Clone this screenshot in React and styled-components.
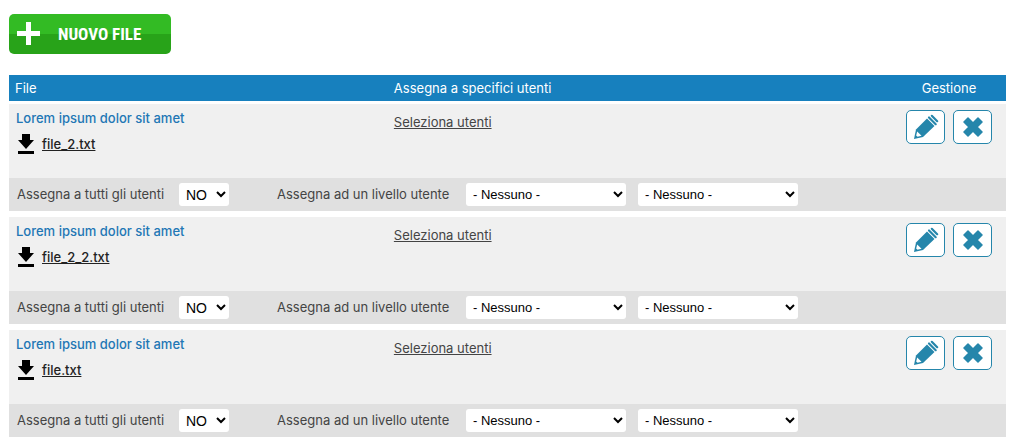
import { useState } from 'react';
import styled, { createGlobalStyle } from 'styled-components';

const GlobalStyle = createGlobalStyle`
  body {
    margin: 0;
    background: #fff;
    color: #444;
    font-family: 'Century Gothic', Inter, sans-serif;
    font-size: 13px;
    line-height: 16px;
  }
`;

const Page = styled.main`
  padding: 14px 5px 4px 9px;
`;

const NewFileButton = styled.button`
  display: flex;
  align-items: center;
  gap: 17px;
  height: 40px;
  margin: 0 0 21px;
  padding: 0 30px 0 8px;
  border: 0;
  border-radius: 5px;
  background: linear-gradient(#33bb24 50%, #28a319 50%);
  color: #fff;
  font-family: 'Liberation Sans Narrow', 'Roboto Condensed', 'Liberation Sans', sans-serif;
  font-size: 17px;
  font-weight: bold;
  text-transform: uppercase;
  cursor: pointer;
`;

const Table = styled.table`
  width: 100%;
  border-spacing: 0;
  table-layout: fixed;
`;

const HeadCell = styled.th`
  box-sizing: border-box;
  width: ${({ width }) => width};
  padding: 5px 6px;
  border-bottom: 3px solid #fff;
  background: #1780be;
  color: #fff;
  font-weight: 400;
  text-align: ${({ align }) => align || 'left'};
`;

const Cell = styled.td`
  height: 62px;
  padding: 6px;
  background: #f0f0f0;
  vertical-align: top;
`;

const Title = styled.div`
  padding-left: 1px;
  color: #2277b5;
  font-weight: 500;
`;

const Download = styled.a`
  display: inline-flex;
  align-items: center;
  gap: 8px;
  margin-top: 8px;
  padding-left: 3px;
  color: #222;
  font-weight: 500;
`;

const UsersLink = styled.a`
  display: inline-block;
  margin-top: 4px;
  color: #444;
`;

const Actions = styled.div`
  display: flex;
  justify-content: center;
  gap: 8px;
`;

const IconButton = styled.button`
  display: grid;
  place-items: center;
  width: 39px;
  height: 34px;
  padding: 0;
  border: 1px solid #2586ab;
  border-radius: 5px;
  background: #fff;
  color: #2586ab;
  cursor: pointer;
`;

const OptionsCell = styled.td`
  padding: 5px 8px;
  border-bottom: 6px solid #fff;
  background: #e0e0e0;

  tbody:last-child & {
    border-bottom: 0;
  }
`;

const Options = styled.div`
  display: flex;
  align-items: center;
  gap: 12px;
`;

const Label = styled.label`
  width: ${({ $wide }) => ($wide ? 177 : 150)}px;
  margin-left: ${({ $wide }) => ($wide ? 36 : 0)}px;
  padding-bottom: 2px;
  white-space: nowrap;
`;

const Select = styled.select`
  width: ${({ $short }) => ($short ? 50 : 160)}px;
  height: 23px;
  padding: 0 0 0 3px;
  border: 0;
  border-radius: 3px;
  background: #fff;
  color: #000;
  font-family: 'Liberation Sans', Arial, sans-serif;
  font-size: ${({ $short }) => ($short ? 14 : 13)}px;
`;

const PlusIcon = () => (
  <svg width="24" height="24" viewBox="0 0 24 24" aria-hidden="true">
    <path d="M9 0h5v9h9v5h-9v9H9v-9H0V9h9z" fill="currentColor" />
  </svg>
);

const DownloadIcon = () => (
  <svg width="16" height="20" viewBox="0 0 16 20" aria-hidden="true">
    <path d="M4 0h8v6h4l-8 9-8-9h4zM0 17h16v3H0z" fill="#000" />
  </svg>
);

const PencilIcon = () => (
  <svg width="26" height="26" viewBox="0 0 26 26" aria-hidden="true">
    <path d="M1 25l2-9.500L14 4.500l7.500 7.500L10 23z" fill="currentColor" />
    <path d="M4.200 17.500l4.300 4.300-4 1-1.300-1.300z" fill="#fff" />
    <path d="M16 3.500l6.700 6.700M18.800 1.800l5.400 5.400" stroke="currentColor" strokeWidth="2.200" strokeLinecap="round" />
  </svg>
);

const CrossIcon = () => (
  <svg width="20" height="20" viewBox="0 0 20 20" aria-hidden="true">
    <path
      d="M5 1L10 6 15 1 19 5 14 10 19 15 15 19 10 14 5 19 1 15 6 10 1 5z"
      fill="currentColor"
      stroke="currentColor"
      strokeWidth="1.500"
      strokeLinejoin="round"
    />
  </svg>
);

const files = [
  { id: 1, title: 'Lorem ipsum dolor sit amet', name: 'file_2.txt' },
  { id: 2, title: 'Lorem ipsum dolor sit amet', name: 'file_2_2.txt' },
  { id: 3, title: 'Lorem ipsum dolor sit amet', name: 'file.txt' },
];

const FileRows = ({ file }) => {
  const [everyone, setEveryone] = useState('NO');

  return (
    <tbody>
      <tr>
        <Cell>
          <Title>{file.title}</Title>
          <Download href={`#${file.name}`}>
            <DownloadIcon />
            {file.name}
          </Download>
        </Cell>
        <Cell>
          <UsersLink href="#utenti">Seleziona utenti</UsersLink>
        </Cell>
        <Cell>
          <Actions>
            <IconButton type="button" aria-label="Modifica">
              <PencilIcon />
            </IconButton>
            <IconButton type="button" aria-label="Elimina">
              <CrossIcon />
            </IconButton>
          </Actions>
        </Cell>
      </tr>
      <tr>
        <OptionsCell colSpan={3}>
          <Options>
            <Label htmlFor={`all-${file.id}`}>Assegna a tutti gli utenti</Label>
            <Select
              $short
              id={`all-${file.id}`}
              value={everyone}
              onChange={(e) => setEveryone(e.target.value)}
            >
              <option>NO</option>
              <option>SI</option>
            </Select>
            <Label $wide htmlFor={`level-${file.id}`}>
              Assegna ad un livello utente
            </Label>
            <Select id={`level-${file.id}`}>
              <option>- Nessuno -</option>
            </Select>
            <Select aria-label="Secondo livello utente">
              <option>- Nessuno -</option>
            </Select>
          </Options>
        </OptionsCell>
      </tr>
    </tbody>
  );
};

const App = () => (
  <>
    <GlobalStyle />
    <Page>
      <NewFileButton type="button">
        <PlusIcon />
        Nuovo file
      </NewFileButton>
      <Table>
        <thead>
          <tr>
            <HeadCell width="38%">File</HeadCell>
            <HeadCell>Assegna a specifici utenti</HeadCell>
            <HeadCell width="114px" align="center">
              Gestione
            </HeadCell>
          </tr>
        </thead>
        {files.map((file) => (
          <FileRows key={file.id} file={file} />
        ))}
      </Table>
    </Page>
  </>
);

export default App;
